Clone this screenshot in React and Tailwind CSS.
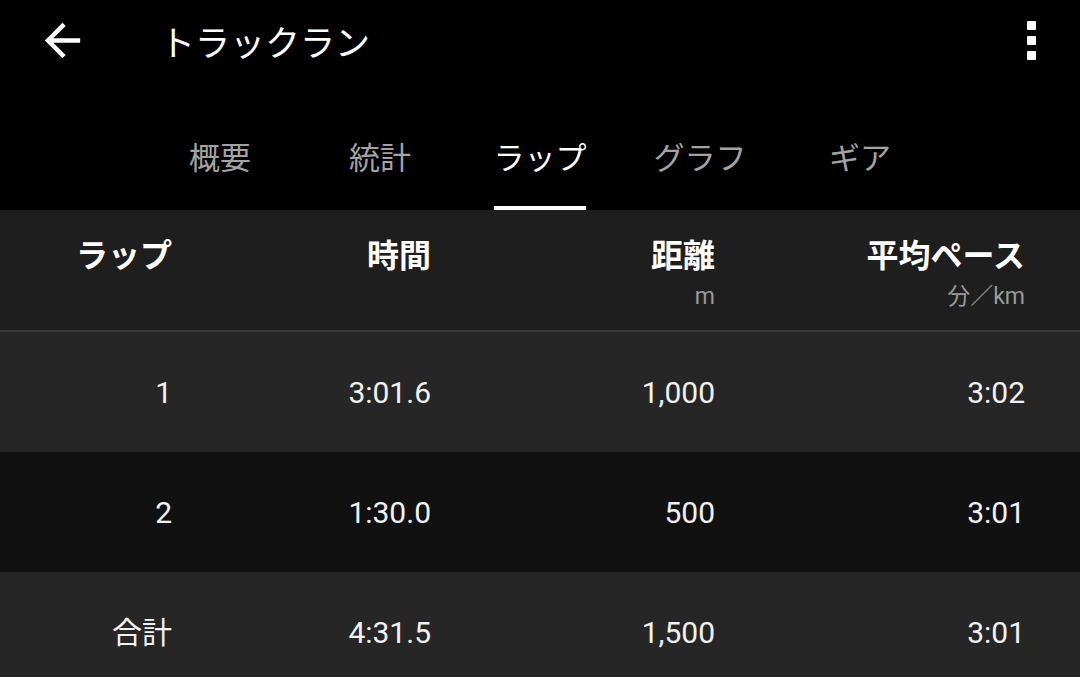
const font = { fontFamily: "Roboto, 'Noto Sans CJK JP', sans-serif" };
const jp = { fontFamily: "'Noto Sans CJK JP', sans-serif" };

const tabs = ["概要", "統計", "ラップ", "グラフ", "ギア"];

const rows = [
  { lap: "1", time: "3:01.6", dist: "1,000", pace: "3:02", bg: "bg-[#262626]" },
  { lap: "2", time: "1:30.0", dist: "500", pace: "3:01", bg: "bg-[#111111]" },
  { lap: "合計", time: "4:31.5", dist: "1,500", pace: "3:01", bg: "bg-[#262626]" },
];

const cols = "grid grid-cols-[172px_259px_284px_310px]";

function TopBar() {
  return (
    <div className="relative flex h-[84px] items-center">
      <svg
        className="absolute left-[36px] top-[14px]"
        width="53"
        height="53"
        viewBox="0 0 24 24"
        fill="#ffffff"
      >
        <path d="M20 11H7.83l5.59-5.59L12 4l-8 8 8 8 1.41-1.41L7.83 13H20v-2z" />
      </svg>
      <div className="ml-[160px] mt-[-2px] text-[35px] text-white" style={jp}>
        トラックラン
      </div>
      <div className="absolute left-[1027px] top-[21px] flex flex-col gap-[6px]">
        <div className="h-[9px] w-[9px] rounded-[1px] bg-white" />
        <div className="h-[9px] w-[9px] rounded-[1px] bg-white" />
        <div className="h-[9px] w-[9px] rounded-[1px] bg-white" />
      </div>
    </div>
  );
}

function Tabs() {
  return (
    <div className="flex h-[126px] pl-[140px]" style={jp}>
      {tabs.map((t, i) => {
        const active = i === 2;
        return (
          <div key={t} className="flex w-[160px] flex-col items-center">
            <div className="flex h-[122px] items-center pt-[22px] text-[31px]">
              <span className={active ? "text-white" : "text-[#a3a3a3]"}>{t}</span>
            </div>
            <div className={active ? "h-[4px] w-[92px] bg-white" : "h-[4px]"} />
          </div>
        );
      })}
    </div>
  );
}

function Header() {
  return (
    <div className={`${cols} h-[120px] bg-[#1e1e1e] text-right`}>
      {[
        ["ラップ", ""],
        ["時間", ""],
        ["距離", "m"],
        ["平均ペース", "分／km"],
      ].map(([h, u]) => (
        <div key={h} className="flex flex-col items-end pt-[20px]">
          <div className="text-[32px] font-bold leading-[46px] text-white" style={jp}>
            {h}
          </div>
          <div className="mt-[6px] text-[23px] leading-[30px] text-[#9a9a9a]" style={font}>
            {u}
          </div>
        </div>
      ))}
    </div>
  );
}

export default function App() {
  return (
    <div className="h-[677px] w-[1080px] overflow-hidden bg-black">
      <TopBar />
      <Tabs />
      <Header />
      <div className="h-[2px] bg-[#3a3a3a]" />
      {rows.map((r) => (
        <div key={r.lap} className={`${cols} h-[120px] items-center text-right text-[30px] text-[#f2f2f2] ${r.bg}`} style={font}>
          <div>{r.lap}</div>
          <div>{r.time}</div>
          <div>{r.dist}</div>
          <div>{r.pace}</div>
        </div>
      ))}
    </div>
  );
}
